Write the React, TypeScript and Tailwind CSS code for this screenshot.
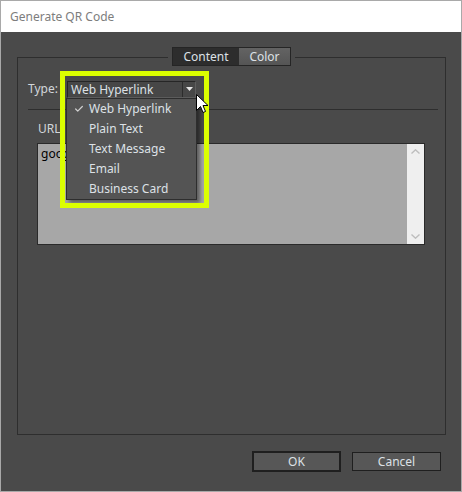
import { Check } from "lucide-react";

const font = { fontFamily: '"Noto Sans", "Open Sans", sans-serif' };

const menuItems = ["Web Hyperlink", "Plain Text", "Text Message", "Email", "Business Card"];

function Cursor() {
  return (
    <svg width="13" height="20" viewBox="0 0 13 20" className="absolute left-[129px] top-[13px]">
      <path
        d="M0.5 0.5 L0.5 16.5 L4.5 12.5 L7 18.5 L9.5 17.5 L7 11.5 L12 11.5 Z"
        fill="#ffffff"
        stroke="#000000"
        strokeWidth="1"
        strokeLinejoin="round"
      />
    </svg>
  );
}

function TypeDropdown() {
  return (
    <div className="relative w-[129px] h-[17px]">
      <div className="flex h-full w-full border border-t-[#262626] border-l-[#262626] border-r-[#5e5e5e] border-b-[#5e5e5e] bg-[#474747]">
        <div className="flex-1 pl-[3px] text-[12px] leading-[15px] text-[#dde1e6]">Web Hyperlink</div>
        <div className="flex w-[13px] items-center justify-center border-l border-[#2c2c2c]">
          <svg width="7" height="4" viewBox="0 0 7 4">
            <path d="M0 0 H7 L3.5 4 Z" fill="#e6e6e6" />
          </svg>
        </div>
      </div>

      {/* open menu */}
      <div className="absolute left-[-1px] top-[17px] w-[131px] border border-[#2e2e2e] bg-[#545454] shadow-[3px_3px_4px_rgba(0,0,0,0.45)]">
        {menuItems.map((item, i) => (
          <div key={item} className="flex h-[20px] items-center text-[12px] text-[#dde1e6]">
            <span className="flex w-[22px] justify-center pl-[2px]">
              {i === 0 ? <Check size={10} strokeWidth={3} className="text-[#d0d0d0]" /> : null}
            </span>
            {item}
          </div>
        ))}
      </div>

      {/* highlight frame */}
      <div className="pointer-events-none absolute left-[-7px] top-[-10px] h-[137px] w-[149px] border-[5px] border-[#dcff00]" />

      <Cursor />
    </div>
  );
}

export default function App() {
  return (
    <div style={font} className="w-[462px] h-[492px] border border-[#a9a9a9] bg-[#4a4a4a]">
      <div className="flex h-[31px] items-center bg-white pl-[9px] text-[12px] text-[#7d7d7d]">Generate QR Code</div>

      <div className="pl-[16px] pr-[15px] pt-[25px]">
        <div className="h-[378px] border border-[#2e2e2e]">
          <div className="-mt-[11px] flex justify-center">
            <div className="flex bg-[#4a4a4a] px-[4px]">
              <div className="flex h-[19px] border border-[#252525]">
                <div className="flex w-[66px] items-center justify-center bg-[#2d2d2d] text-[12px] text-[#dde1e6]">Content</div>
                <div className="flex w-[51px] items-center justify-center bg-gradient-to-b from-[#636363] to-[#555555] text-[12px] text-[#dde1e6]">
                  Color
                </div>
              </div>
            </div>
          </div>

          <div className="mt-[14px] flex items-center pl-[10px]">
            <span className="w-[39px] text-[12px] text-[#d2d6da]">Type:</span>
            <TypeDropdown />
          </div>

          <div className="ml-[10px] mr-[7px] mt-[11px] h-[1px] bg-[#2e2e2e]" />

          <div className="ml-[20px] mt-[11px] text-[12px] leading-[16px] text-[#d2d6da]">URL:</div>

          <div className="ml-[19px] mt-[6px] flex h-[102px] w-[388px] border border-[#2a2a2a] bg-[#a7a7a7]">
            <div className="flex-1 pl-[3px] pt-[1px] text-[12px] text-black">google.com</div>
            <div className="flex w-[17px] flex-col items-center justify-between bg-[#efefef] py-[5px]">
              <svg width="9" height="5" viewBox="0 0 9 5">
                <path d="M0.5 4.5 L4.5 0.8 L8.5 4.5" fill="none" stroke="#bdbdbd" strokeWidth="1.4" />
              </svg>
              <svg width="9" height="5" viewBox="0 0 9 5">
                <path d="M0.5 0.5 L4.5 4.2 L8.5 0.5" fill="none" stroke="#bdbdbd" strokeWidth="1.4" />
              </svg>
            </div>
          </div>
        </div>

        <div className="mt-[16px] flex items-center justify-end gap-[11px] pr-[5px]">
          <button className="h-[21px] w-[89px] border-2 border-[#1f1f1f] bg-[#575757] text-[12px] text-[#dde1e6]">OK</button>
          <button className="h-[19px] w-[89px] border border-[#1f1f1f] bg-[#575757] text-[12px] text-[#dde1e6]">Cancel</button>
        </div>
      </div>
    </div>
  );
}
